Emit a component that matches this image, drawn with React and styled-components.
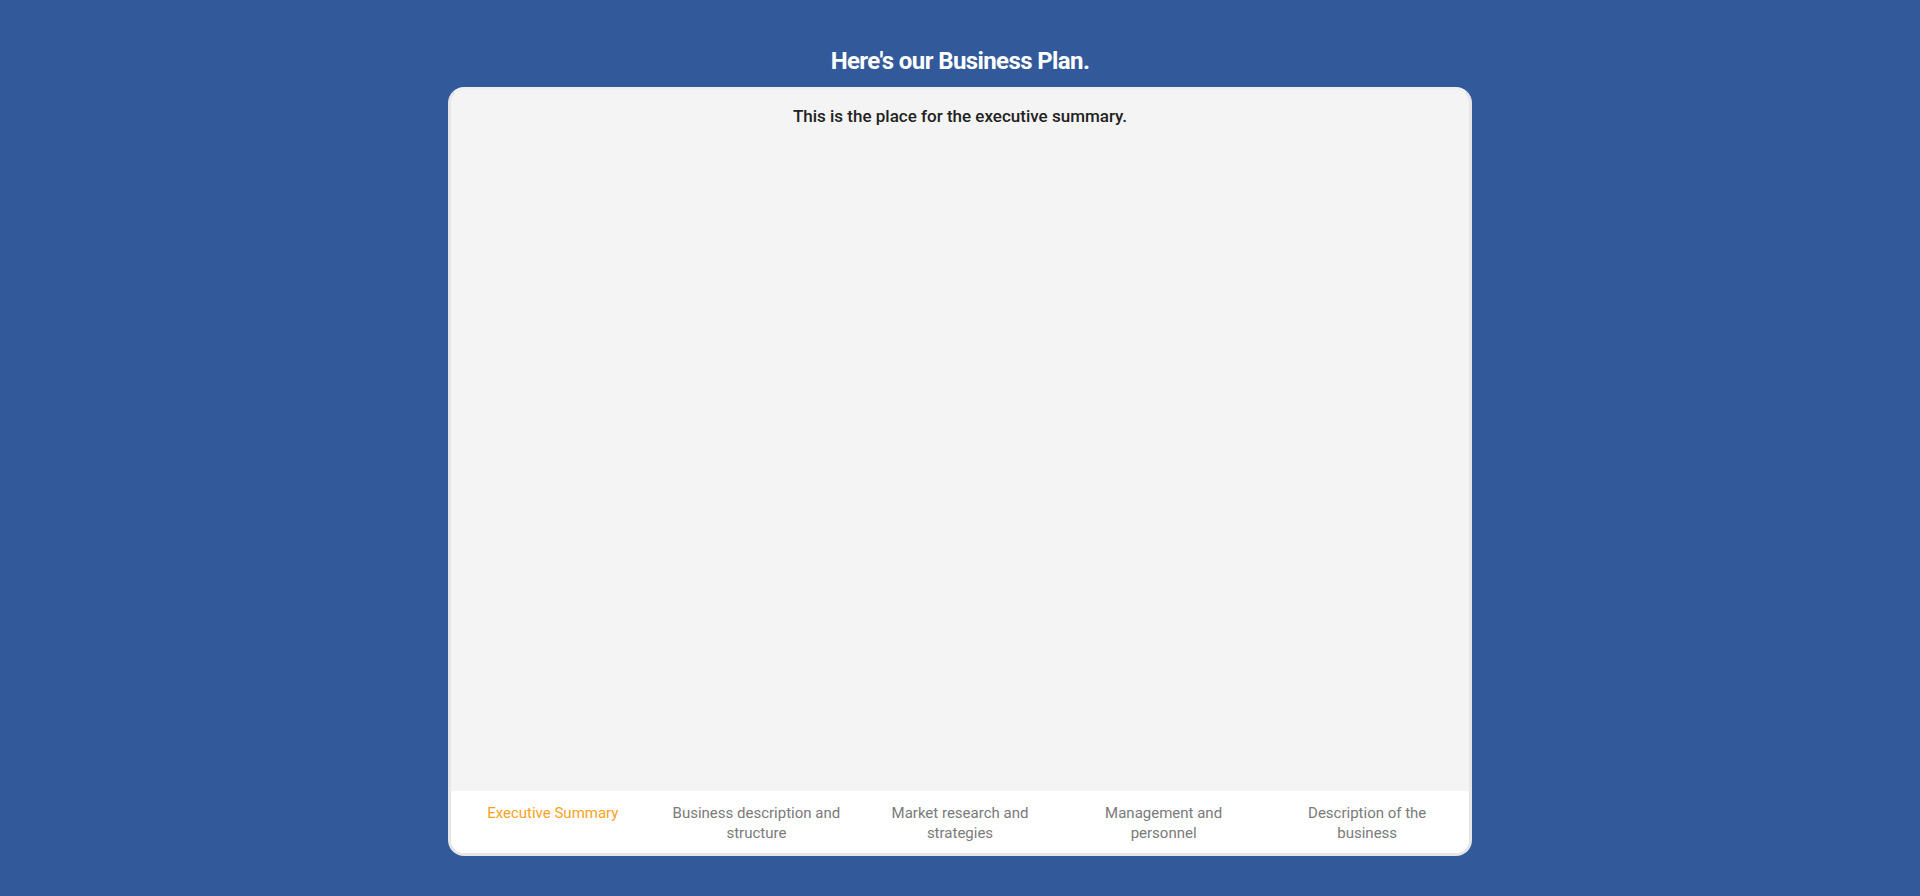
import React, { useState } from "react";
import styled, { createGlobalStyle } from "styled-components";

const GlobalStyle = createGlobalStyle`
  html, body {
    margin: 0;
    padding: 0;
    background: #325a9a;
    font-family: Roboto, "Liberation Sans", sans-serif;
  }
`;

const tabs = [
  "Executive Summary",
  "Business description and structure",
  "Market research and strategies",
  "Management and personnel",
  "Description of the business",
];

function App() {
  const [active, setActive] = useState(0);

  return (
    <>
      <GlobalStyle />
      <Page>
        <Title>Here's our Business Plan.</Title>
        <Card>
          <Content>
            <Summary>This is the place for the executive summary.</Summary>
          </Content>
          <TabBar>
            {tabs.map((t, i) => (
              <Tab key={t} $active={i === active} onClick={() => setActive(i)}>
                {t}
              </Tab>
            ))}
          </TabBar>
        </Card>
      </Page>
    </>
  );
}

export default App;

const Page = styled.div`
  min-height: 896px;
  display: flex;
  flex-direction: column;
  align-items: center;
  padding-top: 44px;
  box-sizing: border-box;
`;

const Title = styled.h1`
  margin: 0 0 9px;
  color: #ffffff;
  font-size: 24px;
  line-height: 34px;
  font-weight: 700;
  letter-spacing: -0.6px;
`;

const Card = styled.div`
  width: 1024px;
  height: 769px;
  box-sizing: border-box;
  display: flex;
  flex-direction: column;
  background: #f4f4f4;
  border: 3px solid #e6e6e6;
  border-top-color: #f0f0f0;
  border-radius: 16px;
  overflow: hidden;
`;

const Content = styled.div`
  flex: 1;
  display: flex;
  justify-content: center;
  padding-top: 14px;
`;

const Summary = styled.p`
  margin: 0;
  color: #222222;
  font-size: 17px;
  line-height: 24px;
  font-weight: 500;
`;

const TabBar = styled.div`
  height: 62px;
  display: grid;
  grid-template-columns: repeat(5, 1fr);
  background: #ffffff;
  padding: 12px 0 0;
  box-sizing: border-box;
`;

const Tab = styled.div`
  padding: 0 14px;
  text-align: center;
  font-size: 15px;
  line-height: 20px;
  color: ${(p) => (p.$active ? "#fba21c" : "#7a7a7a")};
  cursor: pointer;
`;
